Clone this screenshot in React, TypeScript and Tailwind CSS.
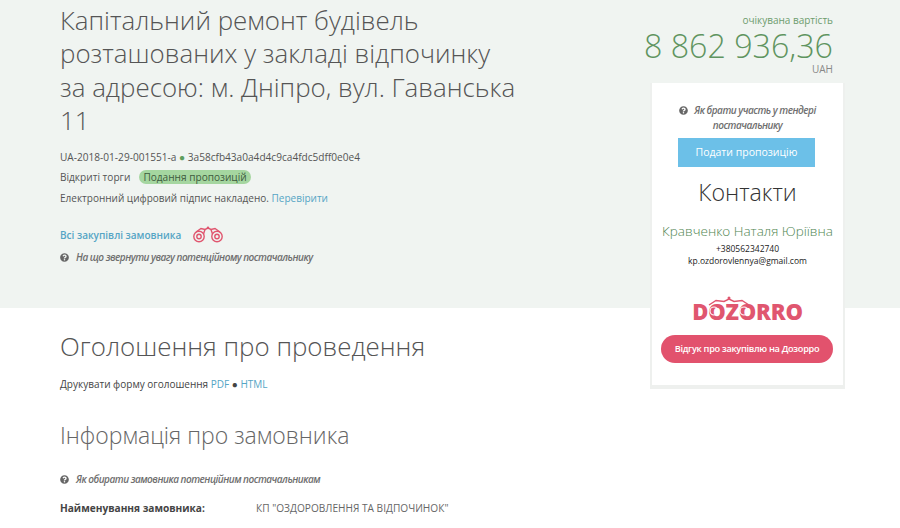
import { FaQuestionCircle } from "react-icons/fa";

function Binoculars({ className }: { className?: string }) {
  return (
    <svg className={className} viewBox="0 0 32 17" fill="none" stroke="#e0566f" strokeWidth={1.4}>
      <circle cx="7" cy="10.5" r="5.2" />
      <circle cx="7" cy="10.5" r="2.2" />
      <circle cx="25" cy="10.5" r="5.2" />
      <circle cx="25" cy="10.5" r="2.2" />
      <path d="M4 6 L9 2.5 L13 3.5 L16 2 L19 3.5 L23 2.5 L28 6" />
      <path d="M11.5 8 L13 3.5 M20.5 8 L19 3.5" />
      <circle cx="16" cy="1.8" r="1.2" fill="#e0566f" stroke="none" />
    </svg>
  );
}

// rings and bridge that sit on the two O letters of the logo
function LogoMark({ className }: { className?: string }) {
  return (
    <svg className={className} viewBox="0 0 50 24" fill="none">
      <circle cx="10" cy="15" r="4" stroke="#ffffff" strokeWidth={1.1} />
      <circle cx="40" cy="15" r="4" stroke="#ffffff" strokeWidth={1.1} />
      <path d="M5 9 L12 4.5 L20 5.5 L25 3 L30 5.5 L38 4.5 L45 9" stroke="#e0566f" strokeWidth={1.4} />
      <circle cx="25" cy="2" r="1.5" fill="#e0566f" />
    </svg>
  );
}

function Hint({ text }: { text: string }) {
  return (
    <p className="flex items-center gap-[7px] text-[10px] font-semibold italic leading-[14px] tracking-[-0.5px] text-[#6f6f6f]">
      <FaQuestionCircle className="h-[9px] w-[9px] shrink-0 text-[#666]" />
      {text}
    </p>
  );
}

export default function App() {
  return (
    <div className="flex h-[528px] w-[900px] overflow-hidden bg-[linear-gradient(#f0f4f1_308px,#ffffff_308px)] font-['Open_Sans',sans-serif] text-[#333]">
      {/* Left column */}
      <div className="w-[590px] shrink-0 pl-[60px]">
        <h1 className="w-[458px] pt-[4px] text-[25.9px] font-light leading-[33.3px] text-[#555]">
          Капітальний ремонт будівель розташованих у закладі відпочинку за адресою: м. Дніпро, вул. Гаванська 11
        </h1>

        <p className="mt-[13px] text-[10.1px] leading-[14px] text-[#555]">
          UA-2018-01-29-001551-a <span className="text-[#5d9e5d]">●</span> 3a58cfb43a0a4d4c9ca4fdc5dff0e0e4
        </p>
        <div className="mt-[6px] flex items-center text-[10.1px] leading-[14px] text-[#555]">
          <span>Відкриті торги</span>
          <span className="ml-[9px] rounded-full bg-[#a5d6a0] px-[4px] text-[#3d5a3d]">Подання пропозицій</span>
        </div>
        <p className="mt-[7px] text-[10px] leading-[14px] text-[#555]">
          Електронний цифровий підпис накладено. <span className="text-[#55a5c5]">Перевірити</span>
        </p>

        <div className="mt-[21px] flex items-center">
          <span className="text-[10px] font-semibold leading-[14px] text-[#55a5c5]">Всі закупівлі замовника</span>
          <Binoculars className="ml-[11px] h-[17px] w-[32px]" />
        </div>
        <div className="mt-[7px]">
          <Hint text="На що звернути увагу потенційному постачальнику" />
        </div>

        <h2 className="mt-[65px] text-[25.9px] font-light leading-[34px] text-[#555]">Оголошення про проведення</h2>
        <p className="mt-[14px] text-[10px] leading-[14px] text-[#444]">
          Друкувати форму оголошення <span className="text-[#55a5c5]">PDF</span> ● <span className="text-[#55a5c5]">HTML</span>
        </p>

        <h2 className="mt-[28px] text-[23px] font-light leading-[32px] text-[#666]">Інформація про замовника</h2>
        <div className="mt-[21px]">
          <Hint text="Як обирати замовника потенційним постачальникам" />
        </div>
        <div className="mt-[15px] flex text-[10.15px] leading-[14px]">
          <span className="w-[196px] shrink-0 font-bold text-[#444]">Найменування замовника:</span>
          <span className="text-[#666]">КП "ОЗДОРОВЛЕННЯ ТА ВІДПОЧИНОК"</span>
        </div>
      </div>

      {/* Right column */}
      <div className="w-[255px] shrink-0">
        <div className="w-[243px] pt-[14px] text-right">
          <p className="text-[10px] leading-[13px] text-[#6d9c6d]">очікувана вартість</p>
          <p className="mt-[1px] whitespace-nowrap text-[32.2px] font-light leading-[36px] text-[#5f9460]">8 862 936,36</p>
          <p className="text-[10px] leading-[11px] text-[#888]">UAH</p>
        </div>

        <div className="ml-[60px] mt-[8px] h-[306px] w-[195px] border-x-2 border-b-4 border-[#eef0ee] bg-white pt-[20px]">
          <div className="mx-auto w-[170px] text-center text-[10px] font-semibold italic leading-[15px] tracking-[-0.5px] text-[#6f6f6f]">
            <FaQuestionCircle className="mr-[6px] inline h-[9px] w-[9px] align-[-1px] text-[#666]" />
            Як брати участь у тендері постачальнику
          </div>
          <div className="ml-[26px] mt-[5px] flex h-[29px] w-[137px] items-center justify-center bg-[#6cc0e8] text-[10.5px] text-white">
            Подати пропозицію
          </div>
          <p className="mt-[10px] text-center text-[23.2px] font-light leading-[30px] text-[#333]">Контакти</p>
          <p className="mt-[15px] whitespace-nowrap text-center text-[13.5px] font-light leading-[18px] text-[#4f8550]">Кравченко Наталя Юріївна</p>
          <p className="mt-[2px] text-center text-[8.5px] leading-[14px] text-[#222]">+380562342740</p>
          <p className="text-center text-[8.5px] leading-[10px] text-[#222]">kp.ozdorovlennya@gmail.com</p>

          <div className="relative mx-auto mt-[32px] h-[24px] w-[112px] text-center">
            <span className="text-[22px] font-extrabold leading-[26px] tracking-[-0.2px] text-[#e0566f]">DOZORRO</span>
            <LogoMark className="absolute left-[12px] top-[-2px] h-[24px] w-[50px]" />
          </div>
          <div className="ml-[9px] mt-[13px] flex h-[28px] w-[172px] items-center justify-center rounded-full bg-[#e2526d] text-[9.2px] font-semibold tracking-[-0.3px] text-white">
            Відгук про закупівлю на Дозорро
          </div>
        </div>
      </div>
    </div>
  );
}
